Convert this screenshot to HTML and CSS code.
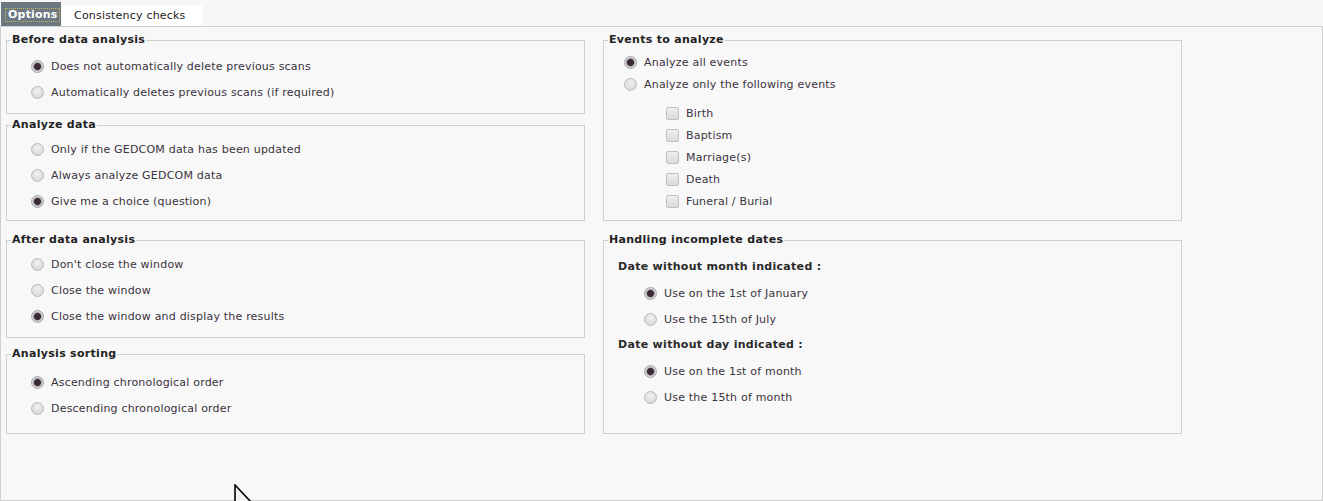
FILE: index.html
```html
<!DOCTYPE html>
<html lang="en">
<head>
<meta charset="utf-8">
<title>Options</title>
<link rel="stylesheet" href="styles.css">
</head>
<body>
<div class="app">
  <div class="tabs">
    <div class="tab tab-active"><span class="tab-focus">Options</span></div>
    <div class="tab">Consistency checks</div>
  </div>
  <div class="panel">
    <div class="grid">
      <div class="stack">
        <fieldset class="group">
          <legend>Before data analysis</legend>
          <label class="opt"><input type="radio" class="radio" name="before" checked><span>Does not automatically delete previous scans</span></label>
          <label class="opt"><input type="radio" class="radio" name="before"><span>Automatically deletes previous scans (if required)</span></label>
        </fieldset>
        <fieldset class="group group-tight">
          <legend>Analyze data</legend>
          <label class="opt"><input type="radio" class="radio" name="analyze"><span>Only if the GEDCOM data has been updated</span></label>
          <label class="opt"><input type="radio" class="radio" name="analyze"><span>Always analyze GEDCOM data</span></label>
          <label class="opt"><input type="radio" class="radio" name="analyze" checked><span>Give me a choice (question)</span></label>
        </fieldset>
      </div>

      <fieldset class="group group-events">
        <legend>Events to analyze</legend>
        <label class="opt opt-events"><input type="radio" class="radio" name="events" checked><span>Analyze all events</span></label>
        <label class="opt opt-events"><input type="radio" class="radio" name="events"><span>Analyze only the following events</span></label>
        <div class="checks">
          <label class="opt opt-check"><input type="checkbox" class="check"><span>Birth</span></label>
          <label class="opt opt-check"><input type="checkbox" class="check"><span>Baptism</span></label>
          <label class="opt opt-check"><input type="checkbox" class="check"><span>Marriage(s)</span></label>
          <label class="opt opt-check"><input type="checkbox" class="check"><span>Death</span></label>
          <label class="opt opt-check"><input type="checkbox" class="check"><span>Funeral / Burial</span></label>
        </div>
      </fieldset>

      <div class="stack">
        <fieldset class="group group-after">
          <legend>After data analysis</legend>
          <label class="opt"><input type="radio" class="radio" name="after"><span>Don't close the window</span></label>
          <label class="opt"><input type="radio" class="radio" name="after"><span>Close the window</span></label>
          <label class="opt"><input type="radio" class="radio" name="after" checked><span>Close the window and display the results</span></label>
        </fieldset>
        <fieldset class="group group-sort">
          <legend>Analysis sorting</legend>
          <label class="opt"><input type="radio" class="radio" name="sort" checked><span>Ascending chronological order</span></label>
          <label class="opt"><input type="radio" class="radio" name="sort"><span>Descending chronological order</span></label>
        </fieldset>
      </div>

      <fieldset class="group group-dates">
        <legend>Handling incomplete dates</legend>
        <div class="sublabel">Date without month indicated :</div>
        <label class="opt opt-date"><input type="radio" class="radio" name="month" checked><span>Use on the 1st of January</span></label>
        <label class="opt opt-date"><input type="radio" class="radio" name="month"><span>Use the 15th of July</span></label>
        <div class="sublabel">Date without day indicated :</div>
        <label class="opt opt-date"><input type="radio" class="radio" name="day" checked><span>Use on the 1st of month</span></label>
        <label class="opt opt-date"><input type="radio" class="radio" name="day"><span>Use the 15th of month</span></label>
      </fieldset>
    </div>
  </div>
  <svg class="cursor" width="18" height="17" viewBox="0 0 18 17" aria-hidden="true">
    <path d="M1 1 L1 25 L6.5 19.5 L10.5 28 L13.5 26.5 L9.5 18 L17 18 Z" fill="#f4f4f4" stroke="#000000" stroke-width="1.6" stroke-linejoin="miter"/>
  </svg>
</div>
</body>
</html>
```
FILE: styles.css
```css
html, body {
  margin: 0;
  padding: 0;
  background: #f7f7f7;
}

body {
  font-family: "DejaVu Sans", Verdana, sans-serif;
  font-size: 11px;
  letter-spacing: 0.2px;
  color: #3a3340;
}

.app {
  position: relative;
  width: 1323px;
  height: 501px;
  overflow: hidden;
}

/* Tabs */
.tabs {
  display: flex;
  align-items: flex-end;
  height: 26px;
}

.tab {
  box-sizing: border-box;
  margin-left: 1px;
  height: 21px;
  width: 140px;
  padding-left: 12px;
  background: #ffffff;
  color: #222;
  line-height: 22px;
  white-space: nowrap;
}

.tab-active {
  height: 24px;
  width: 60px;
  padding: 7px 0 0 5px;
  background: #6b787f;
  color: #ffffff;
  font-weight: bold;
  line-height: 12px;
}

.tab-focus {
  display: inline-block;
  padding: 0 1px 0 2px;
  outline: 1px dotted #c9b463;
  outline-offset: 0;
}

/* Panel */
.panel {
  box-sizing: border-box;
  height: 475px;
  border: 1px solid #cfcfcf;
  background: #f8f8f8;
  padding: 6px 0 0 5px;
}

.grid {
  display: grid;
  grid-template-columns: 579px 579px;
  column-gap: 18px;
  row-gap: 12px;
}

.stack {
  display: flex;
  flex-direction: column;
}

/* Fieldsets */
.group {
  margin: 0;
  min-width: 0;
  border: 1px solid #cfcfcf;
  padding: 6px 8px 8px 4px;
}

.group legend {
  padding: 0 1px;
  font-weight: bold;
  font-size: 11px;
  line-height: 14px;
  letter-spacing: 0.3px;
  color: #222;
}

.group-tight {
  margin-top: 4px;
  padding-top: 4px;
  padding-bottom: 6px;
}

.group-after {
  padding-top: 4px;
}

.group-sort {
  margin-top: 9px;
  padding-top: 8px;
  flex: 1;
}

.group-events {
  padding-top: 4px;
  padding-bottom: 7px;
}

.group-dates {
  padding-top: 7px;
  padding-bottom: 23px;
}

/* Option rows */
.opt {
  display: flex;
  align-items: center;
  gap: 7px;
  height: 26px;
  padding-left: 20px;
  white-space: nowrap;
}

.opt-events {
  height: 22px;
  padding-left: 16px;
}

.checks {
  margin-top: 7px;
}

.opt-check {
  height: 22px;
  padding-left: 58px;
}

.opt-date {
  padding-left: 36px;
}

.sublabel {
  height: 26px;
  line-height: 26px;
  padding-left: 10px;
  font-weight: bold;
  letter-spacing: 0.3px;
  color: #2a2a2a;
}

/* Radio buttons */
.radio {
  appearance: none;
  -webkit-appearance: none;
  box-sizing: border-box;
  flex: none;
  width: 13px;
  height: 13px;
  margin: 0;
  border-radius: 50%;
  border: 1px solid #b9b9b9;
  background: radial-gradient(circle at 50% 35%, #f0f0f0 0, #e0e0e0 55%, #cfcfcf 100%);
  box-shadow: 0 1px 0 rgba(255, 255, 255, 0.6);
}

.radio:checked {
  border-color: #a4a4a4;
  background: radial-gradient(circle at 50% 50%, #3b2937 0, #3b2937 3px, #7a707a 3.6px, #cbcbcb 4.4px, #e2e2e2 6.5px);
}

/* Checkboxes */
.check {
  appearance: none;
  -webkit-appearance: none;
  box-sizing: border-box;
  flex: none;
  width: 13px;
  height: 13px;
  margin: 0;
  border-radius: 2px;
  border: 1px solid #c0c0c0;
  background: linear-gradient(#efefef, #dadada);
}

/* Mouse pointer captured in the screenshot */
.cursor {
  position: absolute;
  left: 234px;
  top: 484px;
}
```
